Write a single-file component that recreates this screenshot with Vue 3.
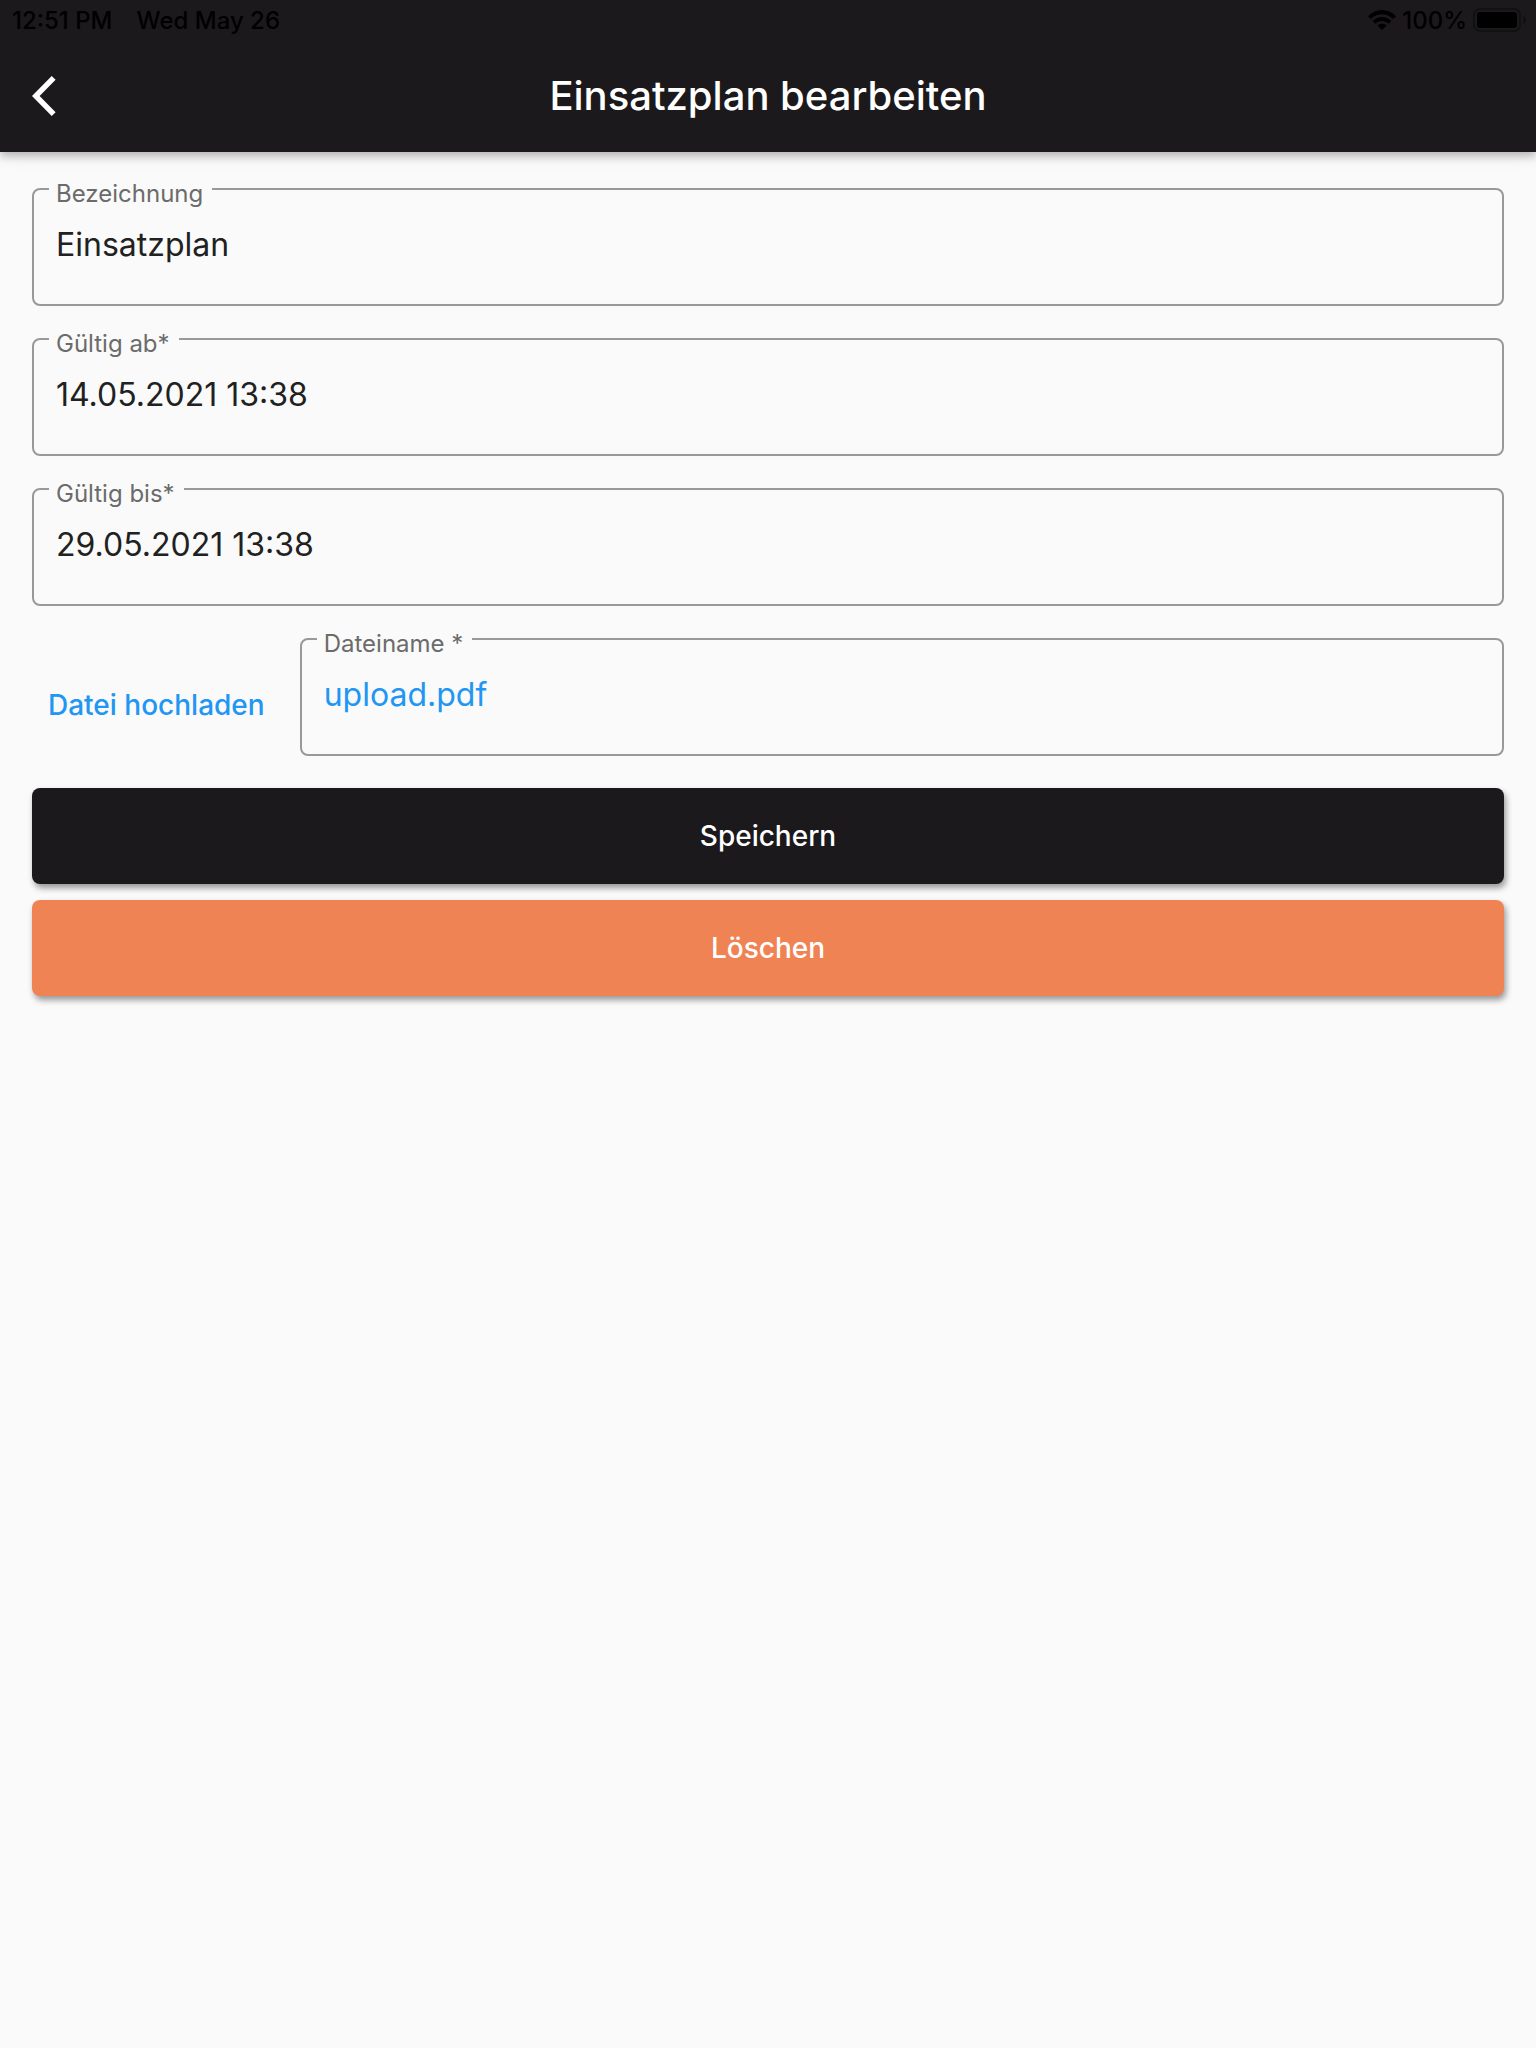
<script setup>
import { ref } from 'vue'

const fields = ref([
  { id: 'bezeichnung', label: 'Bezeichnung', value: 'Einsatzplan' },
  { id: 'gueltig-ab', label: 'Gültig ab*', value: '14.05.2021 13:38' },
  { id: 'gueltig-bis', label: 'Gültig bis*', value: '29.05.2021 13:38' },
])
const fileName = ref('upload.pdf')
</script>

<template>
  <div class="screen">
    <header class="app-bar">
      <div class="status-bar">
        <div class="status-group status-left">
          <span>12:51 PM</span>
          <span>Wed May 26</span>
        </div>
        <div class="status-group status-right">
          <svg class="wifi" width="28" height="20" viewBox="0 0 28 20" aria-hidden="true">
            <path d="M0 6.2C8 -2 20 -2 28 6.2L25.2 9C18.8 2.6 9.2 2.6 2.8 9Z" />
            <path d="M4.7 10.9C10 5.7 18 5.7 23.3 10.9L20.5 13.7C16.7 10.1 11.3 10.1 7.5 13.7Z" />
            <path d="M9.4 15.6C12 13.2 16 13.2 18.6 15.6L14 20Z" />
          </svg>
          <span>100%</span>
          <svg class="battery" width="53" height="24" viewBox="0 0 53 24" aria-hidden="true">
            <rect x="1" y="1" width="46" height="22" rx="6" fill="none" stroke="#111013" stroke-width="2" />
            <rect x="4" y="4" width="40" height="16" rx="3" />
            <path d="M50 8C54 9 54 15 50 16Z" fill="#111013" />
          </svg>
        </div>
      </div>
      <div class="toolbar">
        <button class="back" type="button" aria-label="Zurück">
          <svg width="24" height="40" viewBox="0 0 24 40" aria-hidden="true">
            <path d="M19.7 0L23.6 3.8L7.6 20L23.6 36.2L19.7 40L0 20Z" />
          </svg>
        </button>
        <h1>Einsatzplan bearbeiten</h1>
      </div>
    </header>

    <form class="form" @submit.prevent>
      <div v-for="field in fields" :key="field.id" class="row">
        <div class="field">
          <label :for="field.id">{{ field.label }}</label>
          <input :id="field.id" v-model="field.value" type="text" />
        </div>
      </div>
      <div class="row">
        <button class="upload" type="button">Datei hochladen</button>
        <div class="field">
          <label for="dateiname">Dateiname *</label>
          <input id="dateiname" v-model="fileName" class="file-name" type="text" readonly />
        </div>
      </div>
      <button class="action save" type="submit">Speichern</button>
      <button class="action delete" type="button">Löschen</button>
    </form>
  </div>
</template>

<style>
body {
  background: #fafafa;
}
</style>

<style scoped>
.screen {
  min-height: 100vh;
  background: #fafafa;
  font-family: Inter, Roboto, sans-serif;
}

button,
input {
  font-family: inherit;
  margin: 0;
  border: 0;
}

button {
  cursor: pointer;
}

.app-bar {
  background: #1b191c;
  box-shadow: 0 4px 8px rgba(0, 0, 0, 0.2), 0 2px 16px rgba(0, 0, 0, 0.14);
}

.status-bar {
  display: flex;
  justify-content: space-between;
  height: 40px;
  padding: 0 10px 0 12px;
  font-size: 24px;
  font-weight: 500;
  color: #000;
}

.status-group {
  display: flex;
  align-items: center;
}

.status-left {
  gap: 24px;
}

.status-right {
  gap: 6px;
}

.toolbar {
  display: grid;
  grid-template-columns: 112px 1fr 112px;
  align-items: center;
  height: 112px;
}

.back {
  display: flex;
  align-items: center;
  height: 96px;
  padding: 0 32px;
  background: none;
  fill: #fff;
}

h1 {
  margin: 0;
  color: #fff;
  font-size: 40px;
  font-weight: 500;
  line-height: 48px;
  text-align: center;
}

.form {
  display: flex;
  flex-direction: column;
  gap: 16px;
  padding: 36px 32px 32px;
}

.row {
  display: flex;
  align-items: center;
}

.field {
  position: relative;
  flex: 1;
  min-width: 0;
  margin-bottom: 16px;
}

.field label {
  position: absolute;
  top: -10px;
  left: 17px;
  padding: 0 9px 0 7px;
  background: #fafafa;
  color: #6b6b6b;
  font-size: 24px;
  line-height: 32px;
}

.field input {
  display: block;
  box-sizing: border-box;
  width: 100%;
  height: 118px;
  padding: 32px 22px 37px;
  border: 2px solid #999;
  border-radius: 8px;
  background: transparent;
  color: #212121;
  font-size: 32px;
  outline: none;
}

.field .file-name {
  color: #2196f3;
}

.upload {
  margin-right: 19px;
  padding: 16px;
  background: none;
  color: #2196f3;
  font-size: 28px;
  font-weight: 500;
  line-height: 40px;
}

.action {
  height: 96px;
  padding: 0 32px 1px;
  border-radius: 8px;
  color: #fff;
  font-size: 28px;
  font-weight: 500;
  box-shadow: 2px 4px 6px rgba(0, 0, 0, 0.4);
}

.save {
  background: #1b191c;
}

.delete {
  background: #f08354;
}
</style>
